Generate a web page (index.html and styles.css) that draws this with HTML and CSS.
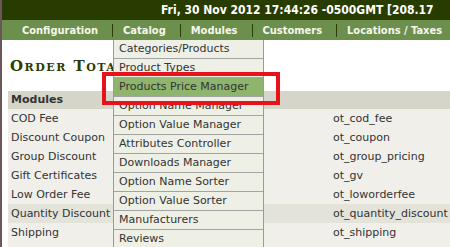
FILE: index.html
```html
<!DOCTYPE html>
<html>
<head>
<meta charset="utf-8">
<link rel="stylesheet" href="styles.css">
</head>
<body>
<div class="page">
  <div class="topbar"><span class="clock">Fri, 30 Nov 2012 17:44:26 -0500GMT [208.17</span></div>
  <nav class="nav">
    <span class="nav-item">Configuration</span>
    <span class="nav-item">Catalog</span>
    <span class="nav-item">Modules</span>
    <span class="nav-item">Customers</span>
    <span class="nav-item last">Locations / Taxes</span>
  </nav>
  <main class="content">
    <h1 class="title">Order Total</h1>
    <div class="table">
      <div class="row head"><span>Modules</span><span></span></div>
      <div class="row"><span>COD Fee</span><span>ot_cod_fee</span></div>
      <div class="row"><span>Discount Coupon</span><span>ot_coupon</span></div>
      <div class="row"><span>Group Discount</span><span>ot_group_pricing</span></div>
      <div class="row"><span>Gift Certificates</span><span>ot_gv</span></div>
      <div class="row"><span>Low Order Fee</span><span>ot_loworderfee</span></div>
      <div class="row hl"><span>Quantity Discount</span><span>ot_quantity_discount</span></div>
      <div class="row"><span>Shipping</span><span>ot_shipping</span></div>
      <div class="row"><span>Sub-Total</span><span>ot_subtotal</span></div>
    </div>
  </main>
  <ul class="menu">
    <li>Categories/Products</li>
    <li>Product Types</li>
    <li class="active">Products Price Manager</li>
    <li>Option Name Manager</li>
    <li>Option Value Manager</li>
    <li>Attributes Controller</li>
    <li>Downloads Manager</li>
    <li>Option Name Sorter</li>
    <li>Option Value Sorter</li>
    <li>Manufacturers</li>
    <li>Reviews</li>
  </ul>
  <div class="callout"></div>
</div>
</body>
</html>
```
FILE: styles.css
```css
html, body {
  margin: 0;
  padding: 0;
  background: #ffffff;
  overflow: hidden;
}
.page {
  position: relative;
  width: 448px;
  height: 247px;
  border-left: 2px solid #6b5757;
  overflow: hidden;
  font-family: "DejaVu Sans", Verdana, sans-serif;
}
.topbar {
  height: 20px;
  background: #283c00;
  color: #ffffff;
  font-family: "DejaVu Sans Condensed", "DejaVu Sans", sans-serif;
  font-stretch: condensed;
  font-weight: bold;
  font-size: 12px;
  line-height: 20px;
  padding-left: 159px;
  white-space: nowrap;
  overflow: hidden;
}
.nav {
  height: 20px;
  background: #6c8f4e;
  display: flex;
  align-items: center;
  padding-left: 10px;
  white-space: nowrap;
}
.nav-item {
  color: #f6f6ea;
  font-family: "DejaVu Sans Condensed", "DejaVu Sans", sans-serif;
  font-stretch: condensed;
  font-weight: bold;
  font-size: 11px;
  line-height: 13px;
  padding: 0 14px 0 10px;
  border-right: 1px solid #2a3d08;
}
.nav-item.last {
  border-right: none;
}
.content {
  padding-top: 16px;
}
.title {
  margin: 0 0 15px 8px;
  font-family: "DejaVu Serif", "Liberation Serif", serif;
  font-variant: small-caps;
  font-weight: bold;
  font-size: 15px;
  letter-spacing: 1.5px;
  line-height: 20px;
  color: #2d3b04;
}
.table {
  margin-left: 6px;
  width: 520px;
  font-size: 11px;
  color: #333333;
}
.row {
  display: grid;
  grid-template-columns: 322px 1fr;
  height: 19px;
  line-height: 19px;
  background: #f0efea;
}
.row span {
  padding-left: 3px;
  white-space: nowrap;
}
.row.head {
  height: 18px;
  line-height: 18px;
  background: #d5d5c9;
  font-weight: bold;
}
.row.hl {
  background: #e3e3da;
}
.menu {
  position: absolute;
  left: 111px;
  top: 40px;
  width: 149px;
  margin: 0;
  padding: 0;
  list-style: none;
  background: #eef0e6;
  border-left: 1px solid #9a9a9a;
  border-right: 1px solid #9a9a9a;
  font-size: 11px;
  color: #333333;
}
.menu li {
  height: 18px;
  line-height: 18px;
  padding-left: 5px;
  border-bottom: 1px solid #a3a3a3;
  white-space: nowrap;
}
.menu li.active {
  background: #8eb46e;
}
.callout {
  position: absolute;
  left: 100px;
  top: 72px;
  width: 178px;
  height: 33px;
  box-sizing: border-box;
  border: 4px solid #e6141a;
}
```
